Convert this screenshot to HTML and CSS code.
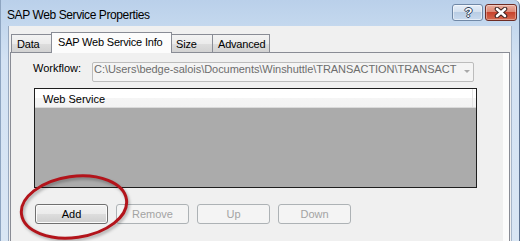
FILE: index.html
```html
<!DOCTYPE html>
<html lang="en">
<head>
    <meta charset="UTF-8">
    <title>SAP Web Service Properties</title>
    <link rel="stylesheet" href="styles.css">
</head>
<body>
    <div class="window">
        <div class="titlebar">
            <span class="title">SAP Web Service Properties</span>
            <div class="caption-buttons">
                <div class="cap-btn cap-help">?</div>
                <div class="cap-btn cap-close">
                    <svg width="14" height="11" viewBox="0 0 14 11">
                        <path d="M3 2 L11 9 M11 2 L3 9" stroke="#3b2320" stroke-width="4.6" stroke-linecap="round"/>
                        <path d="M3 2 L11 9 M11 2 L3 9" stroke="#ffffff" stroke-width="2.6" stroke-linecap="round"/>
                    </svg>
                </div>
            </div>
        </div>

        <div class="client">
            <div class="tabs">
                <div class="tab tab-data">Data</div>
                <div class="tab tab-selected">SAP Web Service Info</div>
                <div class="tab tab-size">Size</div>
                <div class="tab tab-advanced">Advanced</div>
            </div>
            <div class="panel">
                <div class="page">
                    <div class="field-row">
                        <span class="field-label">Workflow:</span>
                        <div class="combo">
                            <span class="combo-text">C:\Users\bedge-salois\Documents\Winshuttle\TRANSACTION\TRANSACT</span>
                            <span class="combo-arrow"><span class="arrow"></span></span>
                        </div>
                    </div>

                    <div class="listbox">
                        <div class="list-header">
                            <span class="list-column">Web Service</span>
                        </div>
                        <div class="list-body"></div>
                    </div>

                    <div class="button-row">
                        <button class="btn">Add</button>
                        <button class="btn" disabled>Remove</button>
                        <button class="btn" disabled>Up</button>
                        <button class="btn" disabled>Down</button>
                    </div>
                </div>
            </div>
        </div>

        <!-- red callout around the Add button -->
        <svg class="callout" width="521" height="241" viewBox="0 0 521 241">
            <defs>
                <filter id="soft" x="-20%" y="-20%" width="140%" height="140%">
                    <feGaussianBlur stdDeviation="1.4"/>
                </filter>
            </defs>
            <ellipse cx="75.5" cy="209" rx="53" ry="30.5" transform="rotate(-8 75.5 209)"
                     fill="none" stroke="rgba(0,0,0,0.3)" stroke-width="3" filter="url(#soft)"/>
            <ellipse cx="74" cy="207" rx="53" ry="30.5" transform="rotate(-8 74 207)"
                     fill="none" stroke="#b3141b" stroke-width="3"/>
        </svg>
    </div>
</body>
</html>
```

FILE: styles.css
```css
body {
    margin: 0;
    padding: 0;
    width: 521px;
    height: 241px;
    overflow: hidden;
    background-color: #ffffff;
    font-family: 'Liberation Sans', Arial, sans-serif;
    color: #000;
}
.window {
    position: relative;
    width: 520px;
    height: 241px;
    box-sizing: border-box;
    border-left: 1px solid #8ea5c1;
    border-right: 1px solid #5d7290;
    border-top-right-radius: 6px;
    background: linear-gradient(#bad0ea, #c4d8ee 26px, #d3e2f3 60px, #d9e6f4);
    overflow: hidden;
}
.titlebar {
    display: flex;
    height: 26px;
    box-sizing: border-box;
    padding: 0 2px 0 6px;
}
.title {
    padding-top: 8px;
    font-size: 12px;
    line-height: 14px;
    letter-spacing: -0.4px;
}
.caption-buttons {
    display: flex;
    gap: 2px;
    margin-left: auto;
    margin-top: 4px;
}
.cap-btn {
    height: 17px;
    box-sizing: border-box;
    border-radius: 3px;
    display: flex;
    align-items: center;
    justify-content: center;
}
.cap-help {
    width: 31px;
    border: 1px solid #7088a6;
    background: linear-gradient(#e6eef8, #d2dfee 50%, #b9cde4 50%, #c9daee);
    box-shadow: inset 0 0 0 1px rgba(255, 255, 255, 0.5);
    color: #fff;
    font-weight: bold;
    font-size: 13px;
    line-height: 15px;
    padding-left: 2px;
    text-shadow: -1px 0 #2d3d55, 1px 0 #2d3d55, 0 -1px #2d3d55, 0 1px #2d3d55;
}
.cap-close {
    width: 32px;
    border: 1px solid #6e2c24;
    background: linear-gradient(#eab0a2, #db8470 50%, #c7432d 50%, #d46a50);
    box-shadow: inset 0 0 0 1px rgba(255, 255, 255, 0.35);
}
.client {
    margin-left: 7px;
    width: 504px;
    height: 215px;
    box-sizing: border-box;
    border-left: 1px solid #97a8be;
    border-right: 1px solid #a6b6ca;
    background-color: #f0f0f0;
    padding: 6px 0 0 1px;
}
.tabs {
    display: flex;
    align-items: flex-end;
    padding-left: 1px;
    height: 20px;
}
.tab {
    height: 18px;
    box-sizing: border-box;
    border: 1px solid #898c95;
    border-bottom: none;
    background: linear-gradient(#f3f3f3, #ebebeb 50%, #dedede 50%, #d2d2d2);
    font-size: 11px;
    line-height: 13px;
    letter-spacing: -0.2px;
    padding: 3px 0 0 5px;
    margin-left: -1px;
    white-space: nowrap;
}
.tab-data {
    margin-left: 0;
    width: 41px;
}
.tab-selected {
    position: relative;
    z-index: 1;
    width: 121px;
    height: 21px;
    margin-bottom: -1px;
    padding-left: 6px;
    background: #fcfcfc;
}
.tab-size {
    width: 42px;
    padding-left: 4px;
}
.tab-advanced {
    width: 58px;
}
.panel {
    width: 500px;
    height: 190px;
    box-sizing: border-box;
    border: 1px solid #898c95;
    background-color: #fcfcfc;
    padding-right: 6px;
}
.page {
    height: 100%;
    background-color: #f0f0f0;
    padding: 9px 0 0 22px;
    box-sizing: border-box;
}
.field-row {
    display: flex;
    align-items: flex-start;
}
.field-label {
    width: 59px;
    font-size: 11px;
    line-height: 13px;
}
.combo {
    display: flex;
    width: 382px;
    height: 20px;
    box-sizing: border-box;
    border: 1px solid #bcbcbc;
    border-radius: 2px;
    background-color: #f4f4f4;
}
.combo-text {
    width: 364px;
    box-sizing: border-box;
    padding-left: 1px;
    white-space: nowrap;
    font-size: 11px;
    line-height: 12px;
    letter-spacing: -0.05px;
    color: #6d6d6d;
}
.combo-arrow {
    width: 16px;
    padding: 7px 0 0 7px;
    box-sizing: border-box;
}
.arrow {
    display: block;
    width: 0;
    height: 0;
    border-left: 3px solid transparent;
    border-right: 3px solid transparent;
    border-top: 3px solid #a9a9a9;
}
.listbox {
    margin: 6px 0 0 1px;
    width: 443px;
    height: 100px;
    box-sizing: border-box;
    border: 1px solid #1e1e1e;
    display: flex;
    flex-direction: column;
}
.list-header {
    display: flex;
    height: 18px;
    background: linear-gradient(#ffffff, #ffffff 50%, #f5f5f5 50%, #f3f3f3);
    border-bottom: 1px solid #dadada;
}
.list-column {
    width: 438px;
    box-sizing: border-box;
    border-right: 1px solid #e3e3e3;
    padding: 4px 0 0 8px;
    font-size: 11px;
    line-height: 13px;
}
.list-body {
    flex: 1;
    background-color: #ababab;
}
.button-row {
    display: flex;
    gap: 8px;
    margin: 16px 0 0 2px;
}
.btn {
    width: 73px;
    height: 20px;
    box-sizing: border-box;
    padding: 0;
    border: 1px solid #707070;
    border-radius: 3px;
    background: linear-gradient(#f2f2f2, #ebebeb 50%, #dddddd 50%, #cfcfcf);
    box-shadow: inset 0 0 0 1px #fbfbfb;
    font-family: 'Liberation Sans', Arial, sans-serif;
    font-size: 11px;
    line-height: 13px;
    color: #000;
}
.btn:disabled {
    border-color: #adb2b5;
    background: #f4f4f4;
    box-shadow: none;
    color: #a3a3a3;
}
.callout {
    position: absolute;
    left: -1px;
    top: 0;
    pointer-events: none;
}
```
